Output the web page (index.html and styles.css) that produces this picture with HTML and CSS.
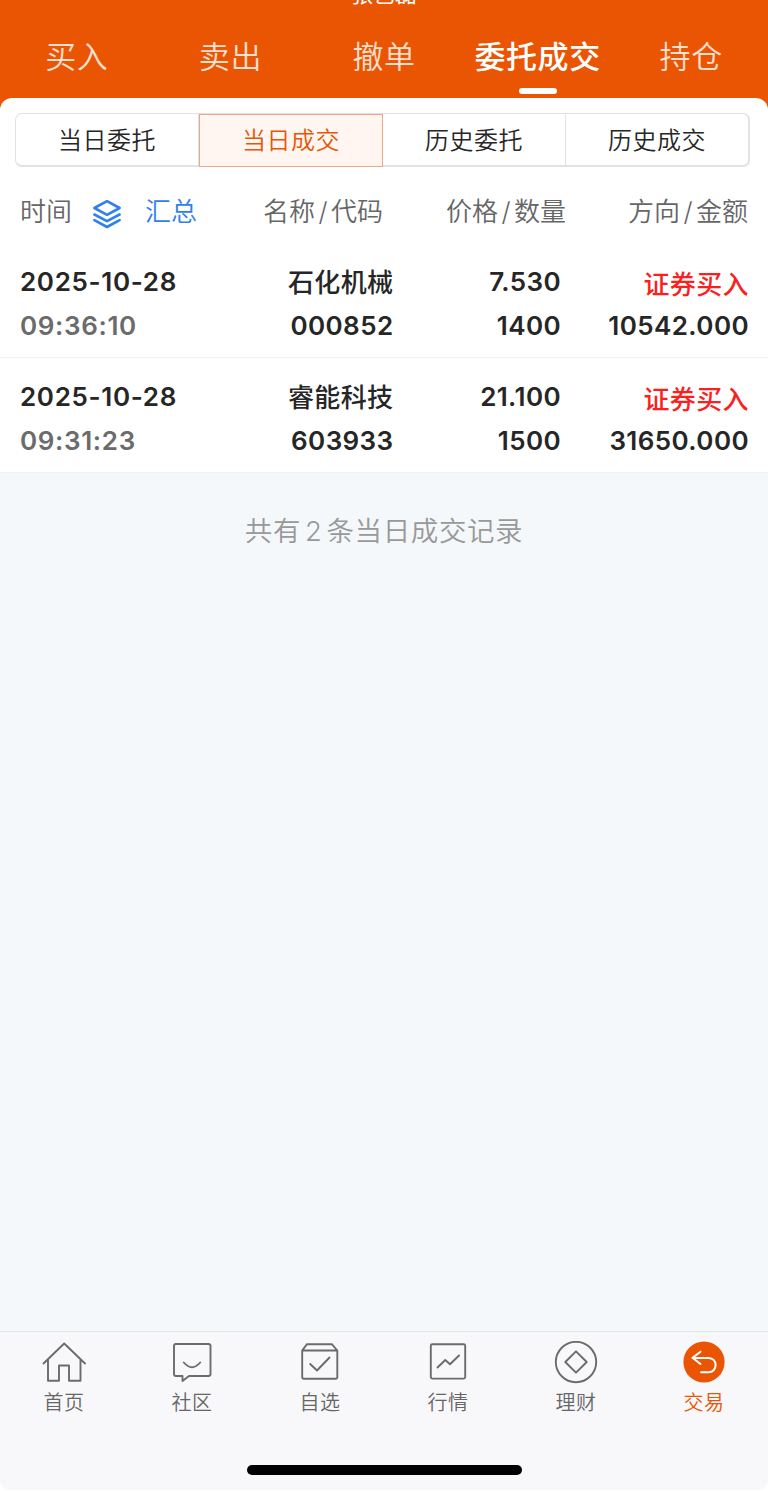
FILE: index.html
```html
<!DOCTYPE html>
<html lang="zh-CN">

<head>
    <meta charset="UTF-8">
    <meta name="viewport" content="width=device-width, initial-scale=1.0">
    <title>当日成交</title>
    <link rel="stylesheet" href="styles.css">
</head>

<body>
    <header class="top">
        <div class="account">张艺磊</div>
        <nav class="tabs">
            <a class="tab">买入</a>
            <a class="tab">卖出</a>
            <a class="tab">撤单</a>
            <a class="tab active">委托成交</a>
            <a class="tab">持仓</a>
        </nav>
    </header>

    <main class="panel">
        <div class="segments">
            <a class="segment">当日委托</a>
            <a class="segment selected">当日成交</a>
            <a class="segment">历史委托</a>
            <a class="segment">历史成交</a>
        </div>

        <div class="grid head">
            <div class="time">
                <span>时间</span>
                <svg class="layers" width="30" height="30" viewBox="0 0 30 30">
                    <path d="M15 2.2 L27.6 9 L15 15.8 L2.4 9 Z" />
                    <path d="M2.4 15.5 L15 22.2 L27.6 15.5" />
                    <path d="M2.4 21.2 L15 28 L27.6 21.2" />
                </svg>
                <span class="summary">汇总</span>
            </div>
            <div class="stock">名称<i>/</i>代码</div>
            <div>价格<i>/</i>数量</div>
            <div>方向<i>/</i>金额</div>
        </div>

        <div class="grid row">
            <div class="time">2025-10-28<br><span class="clock">09:36:10</span></div>
            <div><span class="name">石化机械</span><br>000852</div>
            <div class="price">7.530<br>1400</div>
            <div><span class="buy">证券买入</span><br>10542.000</div>
        </div>
        <div class="grid row">
            <div class="time">2025-10-28<br><span class="clock">09:31:23</span></div>
            <div><span class="name">睿能科技</span><br>603933</div>
            <div class="price">21.100<br>1500</div>
            <div><span class="buy">证券买入</span><br>31650.000</div>
        </div>
    </main>

    <p class="total">共有<span>2</span>条当日成交记录</p>

    <footer class="bottom">
        <nav class="menu">
            <a class="item">
                <svg width="44" height="44" viewBox="0 0 44 44">
                    <path d="M1.5 22.5 L22.2 2.5 L43 22.5 M6 19 V39.8 H17 V24.5 H27 V39.8 H38.5 V19" />
                </svg>
                首页
            </a>
            <a class="item">
                <svg width="44" height="44" viewBox="0 0 44 44">
                    <path d="M5.5 3 H38.5 Q40.5 3 40.5 5 V33 Q40.5 35 38.5 35 H19 L12.5 40 V35 H6 Q4 35 4 33 V5 Q4 3 6 3 Z M13.8 21.5 Q22 31 30.2 21.5" />
                </svg>
                社区
            </a>
            <a class="item">
                <svg width="44" height="44" viewBox="0 0 44 44">
                    <path d="M4.2 9.5 L9 3.2 H33.8 L39.3 9.5 M4.2 9.5 H39.3 V36 Q39.3 37.8 37.5 37.8 H6 Q4.2 37.8 4.2 36 Z M12.2 23 L19 29.5 L31.5 16.5" />
                </svg>
                自选
            </a>
            <a class="item">
                <svg width="44" height="44" viewBox="0 0 44 44">
                    <rect x="4.8" y="3.2" width="34.4" height="34.4" rx="1.5" />
                    <path d="M11.5 26.5 L19.3 19 L24 23.3 L33 14.5" />
                </svg>
                行情
            </a>
            <a class="item">
                <svg width="44" height="44" viewBox="0 0 44 44">
                    <circle cx="22" cy="21" r="20.2" />
                    <path d="M22 10.3 L32.7 21 L22 31.7 L11.3 21 Z" />
                </svg>
                理财
            </a>
            <a class="item current">
                <svg width="44" height="44" viewBox="0 0 44 44">
                    <circle class="disc" cx="22" cy="21" r="20.6" />
                    <path d="M18.5 10.7 L10.5 16.7 L18.5 23 M10.5 16.9 H26.5 C36 16.9 36 31.2 26.5 31.2 H19" />
                </svg>
                交易
            </a>
        </nav>
        <div class="home-bar"></div>
    </footer>
</body>

</html>
```
FILE: styles.css
```css
* {
    box-sizing: border-box;
}

body {
    margin: 0;
    height: 1491px;
    display: flex;
    flex-direction: column;
    font-family: Inter, "Noto Sans CJK SC", sans-serif;
    background-color: #fff;
    color: #262626;
}

.top {
    height: 110px;
    background-color: #ea5504;
    color: #fff;
    overflow: hidden;
    flex: none;
}

.account {
    height: 20px;
    margin-top: -16px;
    line-height: 20px;
    font-size: 22px;
    text-align: center;
}

.tabs {
    display: grid;
    grid-template-columns: repeat(5, 1fr);
    margin-top: 21px;
}

.tab {
    display: flex;
    flex-direction: column;
    align-items: center;
    line-height: 63px;
    font-size: 31px;
    letter-spacing: 0.6px;
    font-weight: 350;
    color: #ffdfcd;
}

.tab.active {
    font-weight: 500;
    color: #fff;
}

.tab.active::after {
    content: "";
    width: 38px;
    height: 6px;
    border-radius: 3px;
    background-color: #fff;
}

.panel {
    margin-top: -12px;
    padding-top: 15px;
    border-radius: 12px 12px 0 0;
    background-color: #fff;
    flex: none;
}

.segments {
    display: grid;
    grid-template-columns: 183px 184px 183px 1fr;
    width: 735px;
    height: 54px;
    margin-left: 15px;
    border: 2px solid #dfe3e8;
    border-width: 1px 2px 2px 1px;
    border-radius: 7px;
}

.segment {
    height: 51px;
    line-height: 54px;
    font-size: 24px;
    letter-spacing: 0.5px;
    text-align: center;
    font-weight: 350;
    border-right: 1px solid #dfe3e8;
}

.segment:last-child {
    border-right: none;
}

.segment.selected {
    height: 53px;
    line-height: 52px;
    border: 1px solid #eba987;
    background-color: #fff5f1;
    color: #ea5504;
}

.grid {
    display: grid;
    grid-template-columns: 220px 153px 173px 182px;
    padding-left: 20px;
    text-align: right;
}

.time {
    text-align: left;
}

.head {
    height: 76px;
    line-height: 90px;
    font-size: 26px;
    font-weight: 350;
    color: #666;
}

.head .time {
    display: flex;
    align-items: center;
    height: 90px;
}

.head .stock {
    padding-right: 10px;
}

.head i {
    margin: 0 3.5px;
    font-style: normal;
}

.layers {
    margin: 4px 23px 0 20px;
    fill: none;
    stroke: #2f80ed;
    stroke-width: 2.6;
    stroke-linejoin: round;
    stroke-linecap: round;
}

.summary {
    color: #2f80ed;
}

.row {
    grid-template-columns: 220px 153.5px 173.5px 182px;
    height: 115px;
    padding-top: 17px;
    line-height: 44px;
    font-size: 26px;
    letter-spacing: 0.4px;
    font-weight: 600;
    border-bottom: 1px solid #f1f3f4;
}

.row .time {
    letter-spacing: 0.65px;
}

.clock {
    color: #6b6b6b;
}

.name,
.buy {
    position: relative;
    top: 1px;
    line-height: 1;
    font-weight: 500;
}

.price {
    padding-right: 6px;
}

.buy {
    top: 3px;
    color: #fb1f1f;
}

.total {
    flex: 1;
    margin: 0;
    padding-top: 36px;
    line-height: 44px;
    font-size: 27.5px;
    letter-spacing: 0.6px;
    font-weight: 350;
    text-align: center;
    background-color: #f4f8fa;
    color: #999;
}

.total span {
    margin: 0 4px;
}

.bottom {
    height: 159px;
    margin-bottom: 1px;
    border-top: 1px solid #dce6e8;
    border-radius: 0 0 10px 10px;
    background-color: #f8f8fb;
    flex: none;
}

.menu {
    display: grid;
    grid-template-columns: repeat(6, 1fr);
    padding-top: 9px;
}

.item {
    display: flex;
    flex-direction: column;
    align-items: center;
    height: 124px;
    line-height: 36px;
    font-size: 20px;
    letter-spacing: 0.5px;
    font-weight: 350;
    color: #666;
}

.item svg {
    fill: none;
    stroke: #6b6b6b;
    stroke-width: 1.9;
    stroke-linejoin: round;
    stroke-linecap: round;
}

.item.current {
    color: #ea5504;
}

.item.current svg {
    stroke: #fff;
    stroke-width: 2;
}

.item .disc {
    fill: #ea5504;
    stroke: none;
}

.home-bar {
    width: 275px;
    height: 10px;
    margin: 0 auto;
    border-radius: 5px;
    background-color: #000;
}
```
